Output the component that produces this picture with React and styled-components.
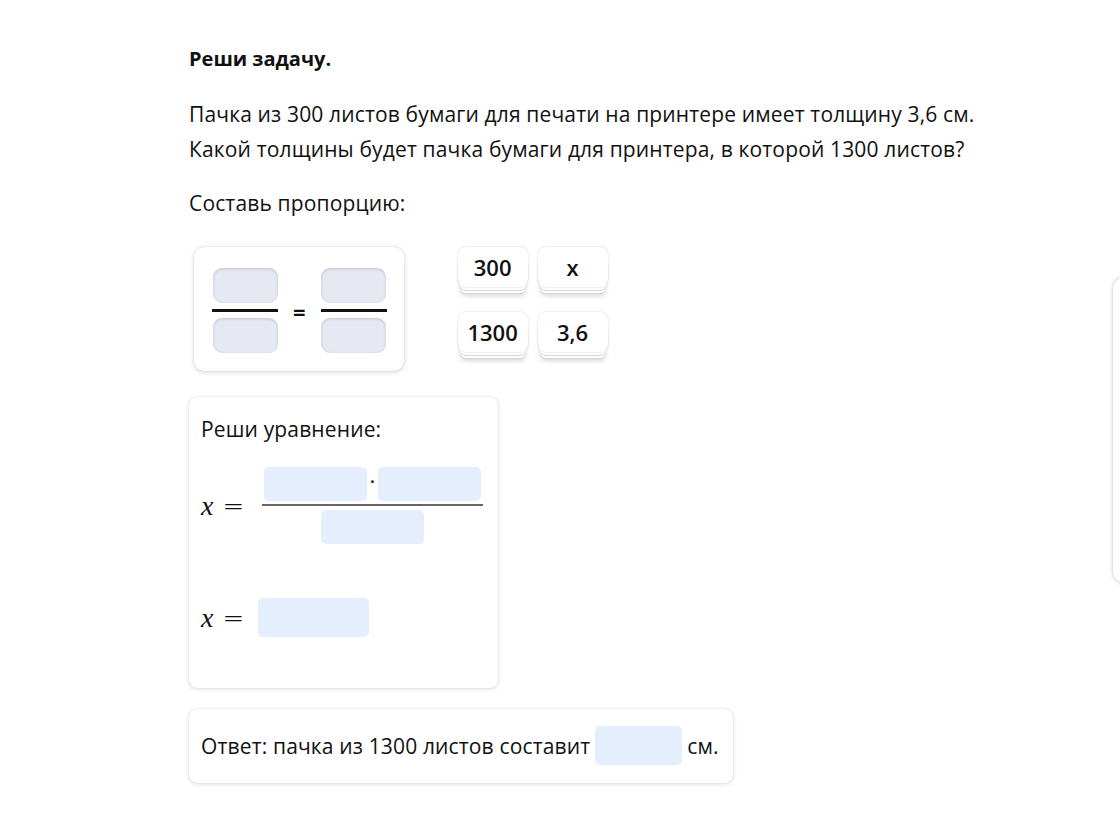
import React from 'react'
import styled, { createGlobalStyle } from 'styled-components'

const GlobalStyle = createGlobalStyle`
  html, body {
    margin: 0;
    padding: 0;
    background: #fff;
    overflow-x: hidden;
  }
  body {
    font-family: "Open Sans", "Noto Sans", sans-serif;
    color: #111;
  }
`

export default function App() {
  return (
    <>
      <GlobalStyle />
      <Page>
        <Main>
          <Title>Реши задачу.</Title>
          <Paragraph>
            Пачка из 300 листов бумаги для печати на принтере имеет толщину 3,6 см.
            <br />
            Какой толщины будет пачка бумаги для принтера, в которой 1300 листов?
          </Paragraph>
          <Caption>Составь пропорцию:</Caption>

          <ProportionRow>
            <ProportionCard>
              <Fraction>
                <DropSlot />
                <BlackBar />
                <DropSlot />
              </Fraction>
              <Equals>=</Equals>
              <Fraction>
                <DropSlot />
                <BlackBar />
                <DropSlot />
              </Fraction>
            </ProportionCard>

            <ChipGrid>
              <Chip>300</Chip>
              <Chip>x</Chip>
              <Chip>1300</Chip>
              <Chip>3,6</Chip>
            </ChipGrid>
          </ProportionRow>

          <EquationCard>
            <CardTitle>Реши уравнение:</CardTitle>
            <MathRow>
              <MathLabel><i>x</i><Eq>=</Eq></MathLabel>
              <MathFraction>
                <Numerator>
                  <InputSlot $w={103} $h={34} />
                  <Dot>·</Dot>
                  <InputSlot $w={103} $h={34} />
                </Numerator>
                <GrayBar />
                <InputSlot $w={103} $h={34} />
              </MathFraction>
            </MathRow>
            <MathRow $top={54} $gap={8}>
              <MathLabel><i>x</i><Eq>=</Eq></MathLabel>
              <InputSlot $w={111} $h={39} />
            </MathRow>
          </EquationCard>

          <AnswerCard>
            Ответ: пачка из 1300 листов составит
            <InputSlot $w={87} $h={39} />
            см.
          </AnswerCard>
        </Main>
        <SidePanel />
      </Page>
    </>
  )
}

const Page = styled.div`
  display: flex;
  align-items: flex-start;
  min-height: 840px;
`

const Main = styled.div`
  display: flex;
  flex-direction: column;
  align-items: flex-start;
  padding: 45px 0 0 189px;
`

const Title = styled.h1`
  margin: 0;
  font-size: 20px;
  font-weight: 700;
  line-height: 28px;
`

const Paragraph = styled.p`
  margin: 24px 0 0;
  font-size: 21px;
  letter-spacing: 0.15px;
  line-height: 35px;
  white-space: nowrap;
`

const Caption = styled.p`
  margin: 19px 0 0;
  font-size: 21px;
  letter-spacing: 0.15px;
  line-height: 35px;
`

const ProportionRow = styled.div`
  display: flex;
  align-items: flex-start;
  gap: 54px;
  margin-top: 26px;
  margin-left: 5px;
`

const ProportionCard = styled.div`
  display: flex;
  align-items: center;
  gap: 15px;
  padding: 21px 17px 18px 18px;
  background: #fff;
  border-radius: 10px;
  box-shadow: 0 1px 5px rgba(40, 40, 70, 0.2), 0 0 1px rgba(40, 40, 70, 0.22);
`

const Fraction = styled.div`
  display: flex;
  flex-direction: column;
  align-items: center;
  gap: 6px;
`

const DropSlot = styled.div`
  width: 65px;
  height: 35px;
  border-radius: 9px;
  background: #e6e8f2;
  box-shadow: inset 0 1px 3px rgba(60, 60, 100, 0.22);
`

const BlackBar = styled.div`
  width: 66px;
  height: 3px;
  background: #111;
`

const Equals = styled.span`
  font-size: 22px;
  font-weight: 700;
  line-height: 1;
`

const ChipGrid = styled.div`
  display: grid;
  grid-template-columns: repeat(2, 70px);
  column-gap: 10px;
  row-gap: 25px;
`

const Chip = styled.div`
  height: 40px;
  display: flex;
  align-items: center;
  justify-content: center;
  background: #fff;
  border-radius: 8px;
  font-size: 22px;
  font-weight: 600;
  color: #111;
  box-shadow:
    0 0 2px rgba(40, 40, 70, 0.25),
    0 4px 0 -1px #fff,
    0 5px 0 -1px #d4d5df,
    0 8px 0 -2px #fff,
    0 9px 0 -2px #d4d5df,
    0 11px 4px -2px rgba(40, 40, 70, 0.18);
`

const Card = styled.div`
  background: #fff;
  border-radius: 8px;
  box-shadow: 0 1px 4px rgba(40, 40, 70, 0.16), 0 0 1px rgba(40, 40, 70, 0.2);
`

const EquationCard = styled(Card)`
  width: 309px;
  height: 291px;
  box-sizing: border-box;
  margin-top: 26px;
  padding: 18px 12px 0 12px;
`

const CardTitle = styled.div`
  font-size: 21px;
  letter-spacing: 0.15px;
  line-height: 28px;
`

const MathRow = styled.div`
  display: flex;
  align-items: center;
  gap: ${p => p.$gap || 12}px;
  margin-top: ${p => p.$top || 24}px;
`

const MathLabel = styled.span`
  display: inline-flex;
  align-items: center;
  gap: 9px;
  width: 49px;
  font-family: "Liberation Serif", "DejaVu Serif", serif;
  font-size: 28px;
  white-space: nowrap;
  i {
    font-style: italic;
  }
`

const Eq = styled.span`
  font-family: "DejaVu Sans", sans-serif;
  font-size: 26px;
  font-weight: 300;
  line-height: 1;
`

const MathFraction = styled.div`
  display: flex;
  flex-direction: column;
  align-items: center;
  width: 221px;
`

const Numerator = styled.div`
  display: flex;
  align-items: center;
  gap: 3px;
`

const Dot = styled.span`
  font-size: 22px;
  line-height: 1;
  margin-top: -8px;
`

const GrayBar = styled.div`
  width: 100%;
  height: 2px;
  background: #666;
  margin: 3px 0 4px;
`

const InputSlot = styled.span`
  display: inline-block;
  width: ${p => p.$w}px;
  height: ${p => p.$h}px;
  border-radius: 5px;
  background: #e4eefc;
  flex-shrink: 0;
`

const AnswerCard = styled(Card)`
  display: flex;
  align-items: center;
  gap: 5px;
  margin-top: 21px;
  padding: 17px 14px 18px 12px;
  font-size: 21px;
  letter-spacing: 0.15px;
  white-space: nowrap;
`

const SidePanel = styled.div`
  flex-shrink: 0;
  margin-left: auto;
  margin-top: 277px;
  margin-right: -193px;
  width: 200px;
  height: 306px;
  background: #fff;
  border-radius: 12px;
  box-shadow: 0 0 3px rgba(40, 40, 80, 0.25), 0 1px 6px rgba(40, 40, 80, 0.1);
`
